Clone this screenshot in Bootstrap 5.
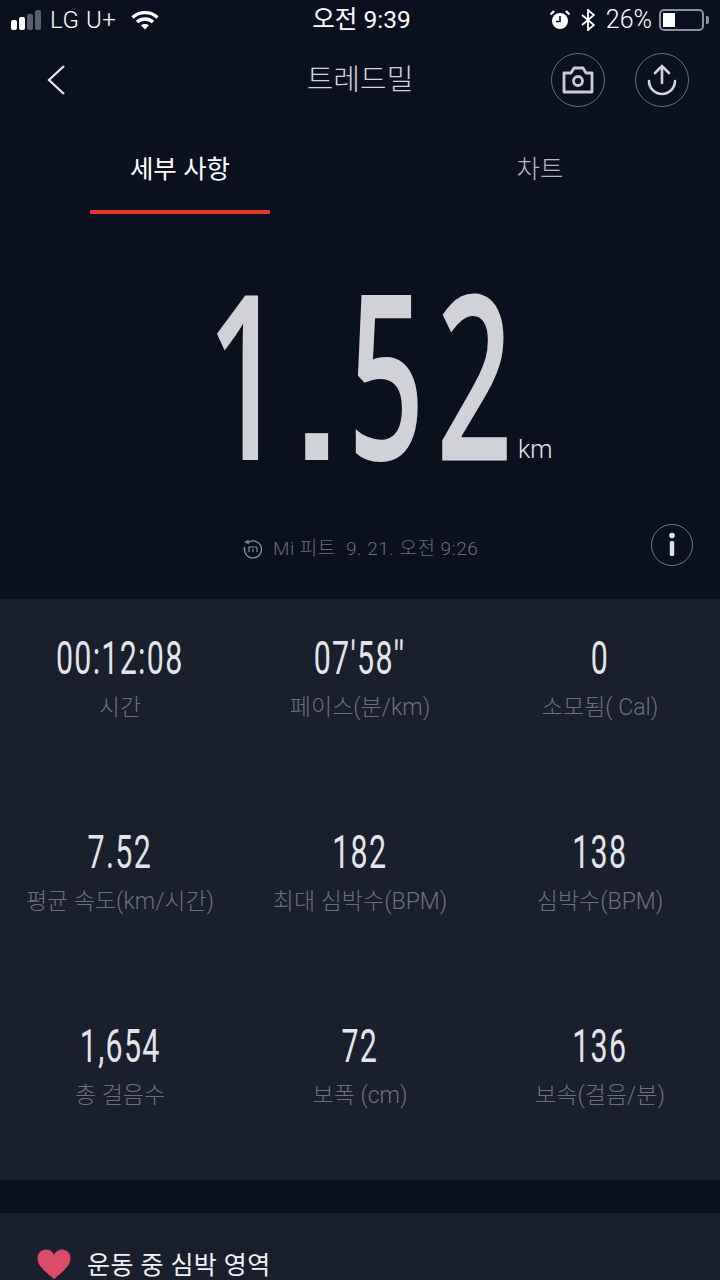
<!DOCTYPE html>
<html lang="ko">
<head>
<meta charset="utf-8">
<title>트레드밀</title>
<link href="https://cdn.jsdelivr.net/npm/bootstrap@5.3.3/dist/css/bootstrap.min.css" rel="stylesheet">
<script src="https://cdn.jsdelivr.net/npm/bootstrap@5.3.3/dist/js/bootstrap.bundle.min.js"></script>
<style>
body {
    background-color: #0b101f;
    font-family: Roboto, "Noto Sans CJK KR", sans-serif;
    color: #fff;
    width: 720px;
    height: 1280px;
    overflow: hidden;
}
.status-bar { height: 40px; padding: 0 11px; font-size: 24px; line-height: 40px; white-space: nowrap; }
.status-side { width: 280px; }
.clock-text { font-size: 24.5px; margin-left: 3px; }
.signal-bar { width: 6px; background: #fff; border-radius: 2px; margin-right: 2px; }
.signal-off { background: #5b6070; }
.carrier { font-weight: 300; margin-left: 7px; letter-spacing: .6px; }
.wifi-icon { margin-left: 14px; }
.alarm-icon { margin-right: 11px; }
.bt-icon { margin-right: 11px; }
.batt-text { font-size: 25px; font-weight: 300; }
.batt-box { width: 45px; height: 22px; border: 2px solid #8d919c; border-radius: 5px; padding: 2px; margin-left: 7px; }
.batt-fill { width: 12px; height: 100%; background: #fff; }
.batt-tip { width: 3px; height: 8px; background: #8d919c; border-radius: 0 2px 2px 0; margin-left: 2px; }
.top-nav { height: 80px; padding: 0 31px 0 46px; }
.top-title { font-size: 29px; font-weight: 300; color: #d3d5de; padding-top: 2px; }
.round-btn { width: 54px; height: 54px; border: 1.5px solid #6a6e7b; border-radius: 50%; }
.btn-pair { gap: 30px; }
.tabs-row { height: 94px; padding-left: 90px; }
.tab-item { width: 180px; height: 94px; line-height: 98px; text-align: center; font-size: 25.5px; }
.tab-on { border-bottom: 4px solid #e2352e; font-weight: 400; }
.tab-off { color: #b4b7c1; font-weight: 300; margin-left: 180px; }
.hero-box { height: 385px; }
.hero-num { top: 62px; left: 207px; height: 190px; width: 300px; }
.big-digits {
    display: block;
    width: 500px;
    font-family: "Open Sans", sans-serif;
    font-size: 230px;
    font-weight: 600;
    line-height: 190px;
    color: #d0d2d7;
    transform: scaleX(.58);
    transform-origin: 0 0;
    letter-spacing: 22px;
    white-space: nowrap;
}
.big-dot {
    display: inline-block;
    font-family: "Liberation Sans", sans-serif;
    font-size: 180px;
    font-weight: 700;
    letter-spacing: 0;
    transform: scaleX(1.55);
    margin: 0 30px 0 10px;
}
.big-last { letter-spacing: 0; margin-left: -2px; }
.km-unit { left: 518px; top: 221px; font-size: 25px; font-weight: 300; color: #e5e6ea; line-height: 30px; }
.device-row { left: 243px; top: 323px; font-size: 19px; font-weight: 300; color: #6a6d79; line-height: 24px; letter-spacing: .5px; white-space: nowrap; }
.device-icon { margin-right: 10px; }
.info-btn { left: 651px; top: 310px; width: 42px; height: 42px; border: 1.5px solid #74777f; border-radius: 50%; }
.stats-box { background: #1a1f2e; height: 581px; }
.stat-cell { height: 194px; padding-top: 30px; text-align: center; }
.stat-num {
    display: inline-block;
    font-family: Roboto, sans-serif;
    font-size: 46px;
    line-height: 58px;
    color: #e3e5ea;
    transform: scaleX(.66);
    letter-spacing: 2px;
    white-space: nowrap;
}
.stat-name { font-size: 23px; font-weight: 300; color: #6d717e; line-height: 30px; margin-top: 6px; white-space: nowrap; }
.heart-card { background: #1a1f2e; margin-top: 33px; height: 70px; padding: 36px 0 0 37px; }
.heart-label { font-size: 25px; line-height: 34px; font-weight: 400; color: #f2f3f5; letter-spacing: .4px; }
</style>
</head>
<body>
    <div class="status-bar d-flex justify-content-between align-items-center">
        <div class="status-side d-flex align-items-center">
            <div class="d-flex align-items-end" style="height:20px">
                <div class="signal-bar" style="height:10px"></div>
                <div class="signal-bar" style="height:13px"></div>
                <div class="signal-bar signal-off" style="height:16px"></div>
                <div class="signal-bar signal-off" style="height:20px"></div>
            </div>
            <span class="carrier">LG U+</span>
            <svg class="wifi-icon" width="28" height="20" viewBox="0 0 28 20" fill="none" stroke="#fff" stroke-width="3.4">
                <path d="M1.5 7.5C8.5 1 19.5 1 26.5 7.5"/>
                <path d="M6 12c4.6-4 11.4-4 16 0"/>
                <path d="M14 19.5l-4-4.3c2.3-1.7 5.7-1.7 8 0z" fill="#fff" stroke="none"/>
            </svg>
        </div>
        <div class="clock-text">오전 9:39</div>
        <div class="status-side d-flex align-items-center justify-content-end">
            <svg class="alarm-icon" width="20" height="20" viewBox="0 0 20 20">
                <circle cx="10" cy="11" r="8" fill="#fff"/>
                <path d="M10 6v5.500H6" stroke="#0a0f1e" stroke-width="1.600" fill="none"/>
                <path d="M0.500 4.500L4 1M19.500 4.500L16 1" stroke="#fff" stroke-width="2.200"/>
            </svg>
            <svg class="bt-icon" width="14" height="22" viewBox="0 0 14 22" fill="none" stroke="#fff" stroke-width="1.800">
                <path d="M1 6l12 10-6 5V1l6 5L1 16"/>
            </svg>
            <span class="batt-text">26%</span>
            <div class="batt-box"><div class="batt-fill"></div></div>
            <div class="batt-tip"></div>
        </div>
    </div>

    <div class="top-nav d-flex align-items-center justify-content-between position-relative">
        <svg width="20" height="32" viewBox="0 0 20 32" fill="none" stroke="#e8e9ed" stroke-width="2.200"><path d="M18 2L3 16l15 14"/></svg>
        <div class="top-title position-absolute top-50 start-50 translate-middle">트레드밀</div>
        <div class="d-flex btn-pair">
            <div class="round-btn d-flex align-items-center justify-content-center">
                <svg width="32" height="28" viewBox="0 0 32 28" fill="none" stroke="#c9ccd6" stroke-width="2.800" stroke-linejoin="round">
                    <path d="M2 7h7l3-5h9l3 5h6v19H2z"/>
                    <circle cx="16" cy="15" r="4.500"/>
                </svg>
            </div>
            <div class="round-btn d-flex align-items-center justify-content-center">
                <svg width="32" height="34" viewBox="0 0 32 34" fill="none" stroke="#d3d5de" stroke-width="2.600" stroke-linecap="round">
                    <path d="M16 20V3M9 10l7-7 7 7"/>
                    <path d="M3 18a13 13 0 0 0 26 0"/>
                </svg>
            </div>
        </div>
    </div>

    <div class="tabs-row d-flex">
        <div class="tab-item tab-on">세부 사항</div>
        <div class="tab-item tab-off">차트</div>
    </div>

    <div class="hero-box position-relative">
        <div class="hero-num position-absolute"><span class="big-digits">1<span class="big-dot">.</span>5<span class="big-last">2</span></span></div>
        <div class="km-unit position-absolute">km</div>
        <div class="device-row position-absolute d-flex align-items-center">
            <svg class="device-icon" width="20" height="20" viewBox="0 0 20 20" fill="none" stroke="#8a8d98" stroke-width="1.400">
                <path d="M5 3.500A8.500 8.500 0 1 1 1.800 8"/>
                <path d="M2 3.500l3-1.500v3" />
                <path d="M6 13V8h7a1 1 0 0 1 1 1v4M10 10v3" stroke-width="1.200"/>
            </svg>
            Mi 피트&nbsp; 9. 21. 오전 9:26
        </div>
        <div class="info-btn position-absolute d-flex align-items-center justify-content-center">
            <svg width="8" height="26" viewBox="0 0 8 26" fill="#dfe1ea">
                <circle cx="4" cy="3.500" r="2.800"/>
                <rect x="1.800" y="9" width="4.400" height="15" rx="1.500"/>
            </svg>
        </div>
    </div>

    <div class="stats-box container-fluid p-0">
        <div class="row g-0" id="stat-grid"></div>
    </div>

    <div class="heart-card d-flex align-items-start">
        <svg width="34" height="30" viewBox="0 0 34 30" class="me-3 flex-shrink-0">
            <path d="M17 30C6 21 .5 16 .5 9 .5 4 4.500.500 9 .500c3.500 0 6.500 2 8 5 1.500-3 4.500-5 8-5 4.500 0 8.500 3.500 8.500 8.500 0 7-5.500 12-16.500 21z" fill="#dc4b68"/>
        </svg>
        <div class="heart-label">운동 중 심박 영역</div>
    </div>

    <script>
        const stats = [
            ["00:12:08", "시간"], ["07'58''", "페이스(분/km)"], ["0", "소모됨( Cal)"],
            ["7.52", "평균 속도(km/시간)"], ["182", "최대 심박수(BPM)"], ["138", "심박수(BPM)"],
            ["1,654", "총 걸음수"], ["72", "보폭 (cm)"], ["136", "보속(걸음/분)"]
        ];
        let statHTML = "";
        for (let i = 0; i < stats.length; i++) {
            statHTML += `<div class="col-4 stat-cell">
                <div><span class="stat-num">${stats[i][0]}</span></div>
                <div class="stat-name">${stats[i][1]}</div>
            </div>`;
        }
        document.getElementById("stat-grid").innerHTML = statHTML;
    </script>
</body>
</html>
